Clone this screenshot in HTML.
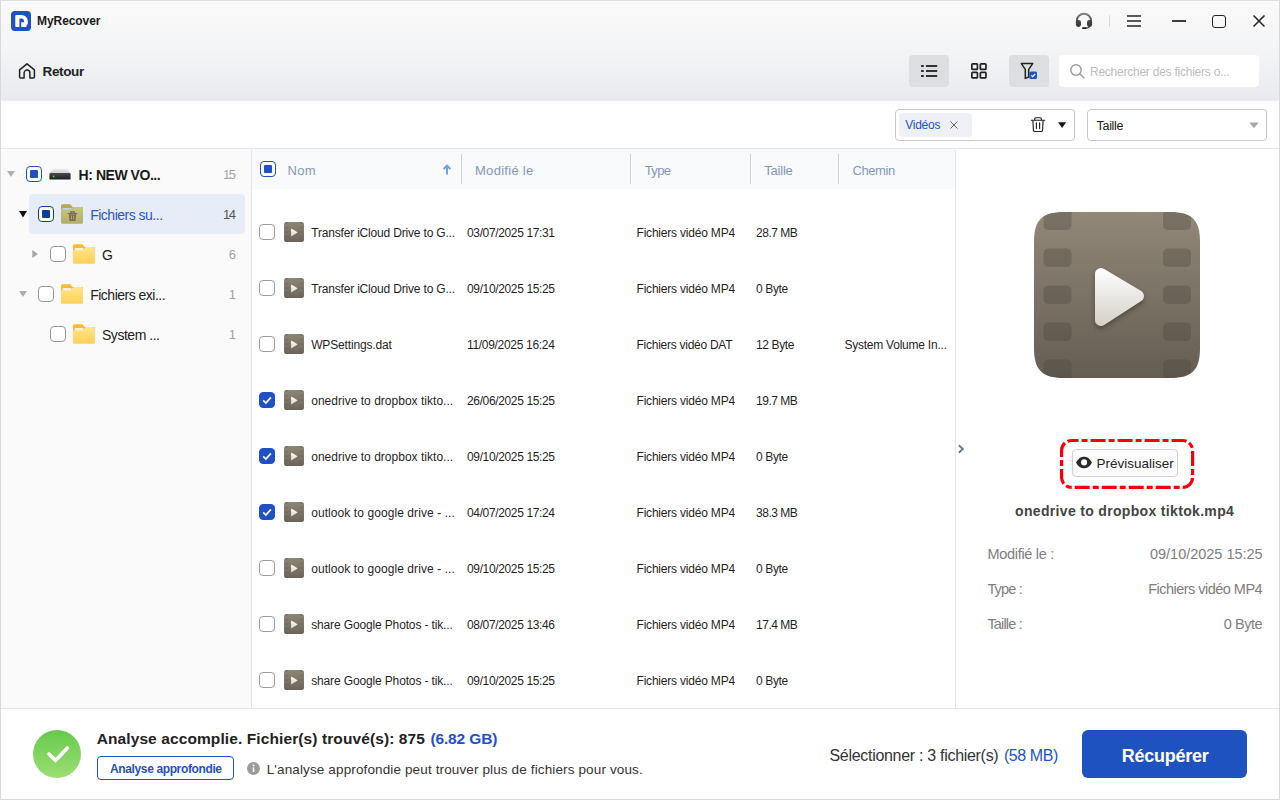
<!DOCTYPE html>
<html lang="fr">
<head>
<meta charset="utf-8">
<title>MyRecover</title>
<style>
*{box-sizing:border-box;margin:0;padding:0}
html,body{width:1280px;height:800px;overflow:hidden;background:#fff}
body{font-family:"Liberation Sans",sans-serif;color:#222;position:relative;font-size:13px}
.abs{position:absolute}
#frame{position:absolute;left:0;top:0;width:1280px;height:800px;border:1px solid #d9d9d9;border-top-color:#dedede;pointer-events:none;z-index:50}
#head{position:absolute;left:0;top:0;width:1280px;height:101px;background:linear-gradient(#fafafa 0,#f3f4f6 52px,#e9eaee 101px)}
.t{position:absolute;white-space:nowrap;line-height:1}
.tb{position:absolute;top:55px;width:40px;height:32px;border-radius:4px}
.tb.on{background:#dddee2}
#search{position:absolute;left:1059px;top:55px;width:200px;height:32px;border-radius:4px;background:#fff}
#filterrow{position:absolute;left:1px;top:101px;width:1278px;height:48px;background:#fff;border-bottom:1px solid #e3e6ec}
.box{position:absolute;top:109px;height:32px;border:1px solid #c9c9c9;border-radius:4px;background:#fff}
#tag{position:absolute;left:3px;top:3px;width:73px;height:24px;background:#eef0f5;border-radius:4px}
#side{position:absolute;left:1px;top:149px;width:251px;height:559px;background:#fafafa;border-right:1px solid #e3e4ec}
.trow{position:absolute;left:0;height:40px;width:250px}
.sel{position:absolute;left:29px;top:194px;width:216px;height:40px;background:#e6edf8;border-radius:4px}
.cb{position:absolute;width:16px;height:16px;border:1px solid #9a9a9a;border-radius:4px;background:#fff}
.cb.part{border-color:#1f51c4;border-width:1.5px}
.cb.part:after{content:"";position:absolute;left:2.5px;top:2.5px;width:8px;height:8px;background:#1f51c4;border-radius:1px}
.cb.part.dk{border-color:#0f3d9e}.cb.part.dk:after{background:#0f3d9e}
.cb.chk{border-color:#1f51c4;background:#1f51c4}
#list{position:absolute;left:252px;top:150px;width:703px;height:558px;background:#fff}
#lh{position:absolute;left:252px;top:149px;width:703px;height:40px;background:#f9fafb}
.hsep{position:absolute;top:154px;width:1px;height:30px;background:#cfd4dc}


#prev{position:absolute;left:955px;top:150px;width:324px;height:558px;background:#fff;border-left:1px solid #e1e4ea}
#bot{position:absolute;left:1px;top:708px;width:1278px;height:91px;background:#fff;border-top:1px solid #e5e5e8}
</style>
</head>
<body>
<div id="head"></div>

<svg class="abs" style="left:11px;top:11px" width="20" height="20" viewBox="0 0 20 20"><rect width="20" height="20" rx="4" fill="#1f51c4"/><path d="M4.300 5a1 1 0 0 1 1-1h5.300a6.200 6.200 0 0 1 6.200 6.200v1.600c0 1.400-.7 2.400-1.500 3.200v1H5.300a1 1 0 0 1-1-1z" fill="#fff"/><path d="M8.400 16V7.500h1.800a2.900 2.900 0 0 1 2.900 2.900v.8h-2.900V16z" fill="#1f51c4"/></svg>
<svg class="abs" style="left:18px;top:62px" width="18" height="18" viewBox="0 0 18 18" fill="none" stroke="#222" stroke-width="1.5" stroke-linejoin="round" stroke-linecap="round"><path d="M1.6 7.900 9 1.800l7.400 6.100v7.100a1 1 0 0 1-1 1h-3.500v-5a2.900 2.900 0 0 0-5.800 0v5H2.600a1 1 0 0 1-1-1z"/></svg>
<!-- window controls -->
<svg class="abs" style="left:1074px;top:11px" width="20" height="20" viewBox="0 0 20 20"><defs><linearGradient id="hs" x1="0" y1="0" x2="0" y2="20" gradientUnits="userSpaceOnUse"><stop offset="0.08" stop-color="#8c8c8c"/><stop offset="0.5" stop-color="#4a4a4a"/><stop offset="0.9" stop-color="#2c2c2c"/></linearGradient></defs><path d="M2.850 11.500V9.800a7.100 7.100 0 0 1 14.200 0v1.700" fill="none" stroke="url(#hs)" stroke-width="1.900"/><rect x="1.900" y="8.900" width="5.100" height="7" rx="2.400" fill="url(#hs)"/><rect x="13" y="8.900" width="5.100" height="7" rx="2.400" fill="url(#hs)"/><path d="M15.600 15.200c-.6 1.300-2 1.900-4.400 1.900" fill="none" stroke="#333" stroke-width="1.100"/><rect x="8" y="16.200" width="4.600" height="1.800" rx="0.900" fill="#222"/></svg>
<div class="abs" style="left:1108.500px;top:15px;width:1.500px;height:12px;background:#dcdcdc"></div>
<svg class="abs" style="left:1127px;top:14px" width="14" height="14" viewBox="0 0 14 14" stroke="#222" stroke-width="1.500"><path d="M0 2h14M0 7h14M0 12h14"/></svg>
<div class="abs" style="left:1172px;top:20px;width:14px;height:1.500px;background:#3c3c3c"></div>
<div class="abs" style="left:1212px;top:14.500px;width:13.700px;height:13.500px;border:1.800px solid #222;border-radius:3px"></div>
<svg class="abs" style="left:1253px;top:15px" width="12" height="12" viewBox="0 0 12 12" stroke="#222" stroke-width="1.500"><path d="M0.500 0.500l11 11M11.500 0.500l-11 11"/></svg>
<!-- toolbar -->
<div class="tb on" style="left:909px"></div>
<svg class="abs" style="left:921px;top:64px" width="17" height="14" viewBox="0 0 17 14" fill="#333"><rect x="0" y="1" width="2.800" height="2"/><rect x="5" y="1" width="11.200" height="2"/><rect x="0" y="6" width="2.800" height="2"/><rect x="5" y="6" width="11.200" height="2"/><rect x="0" y="11" width="2.800" height="2"/><rect x="5" y="11" width="11.200" height="2"/></svg>
<svg class="abs" style="left:970px;top:62px" width="18" height="18" viewBox="0 0 18 18" fill="none" stroke="#222" stroke-width="1.700"><rect x="1.850" y="1.850" width="5.600" height="5.600" rx="0.800"/><rect x="10.350" y="1.850" width="5.600" height="5.600" rx="0.800"/><rect x="1.850" y="10.350" width="5.600" height="5.600" rx="0.800"/><rect x="10.350" y="10.350" width="5.600" height="5.600" rx="0.800"/></svg>
<div class="tb on" style="left:1009px"></div>
<svg class="abs" style="left:1019px;top:61px" width="20" height="20" viewBox="0 0 20 20"><path d="M2.300 2.600h11.400l-4 5.800v7.600l-3.400 1.400V8.400z" fill="none" stroke="#222" stroke-width="1.500" stroke-linejoin="round"/><rect x="10.400" y="10.500" width="7.600" height="7.600" rx="1.600" fill="#1f51c4"/><path d="M12.300 14.300l1.400 1.400 2.500-2.700" fill="none" stroke="#fff" stroke-width="1.200"/></svg>
<div id="search"><svg class="abs" style="left:10px;top:8px" width="17" height="17" viewBox="0 0 17 17" fill="none" stroke="#9c9c9c" stroke-width="1.500"><circle cx="7" cy="7" r="5.200"/><path d="M10.800 10.800l4 4" stroke-linecap="round"/></svg></div>

<div class="t" style="top:15px;font-size:12px;color:#1a1a1a;font-weight:bold;letter-spacing:-0.07px;left:37px;">MyRecover</div>
<div class="t" style="top:64.5px;font-size:13.5px;color:#222;font-weight:bold;letter-spacing:-0.35px;left:42.5px;">Retour</div>
<div class="t" style="top:66px;font-size:12px;color:#bdbdbd;letter-spacing:-0.24px;left:1090px;">Rechercher des fichiers o...</div>
<div id="filterrow"></div>

<div class="box" style="left:895px;width:180px"><div id="tag"></div></div>
<svg class="abs" style="left:950px;top:121px" width="8" height="8" viewBox="0 0 8 8" stroke="#666" stroke-width="1"><path d="M0.500 0.500l7 7M7.500 0.500l-7 7"/></svg>
<svg class="abs" style="left:1030px;top:116px" width="16" height="17" viewBox="0 0 16 17" fill="none" stroke="#222" stroke-width="1.150" stroke-linecap="round" stroke-linejoin="round"><path d="M1.300 4.200h13.400M4.700 4V2.700a1 1 0 0 1 1-1h4.600a1 1 0 0 1 1 1V4M2.900 4.500l.5 9.600a1.500 1.500 0 0 0 1.500 1.400h6.200a1.500 1.500 0 0 0 1.500-1.400l.5-9.600M6.400 6.800v5.800M9.600 6.800v5.800"/></svg>
<svg class="abs" style="left:1058px;top:122px" width="9" height="7" viewBox="0 0 9 7"><path d="M0 0.300h8.200L4.100 5.900z" fill="#161616"/></svg>
<div class="box" style="left:1087px;width:180px"></div>
<svg class="abs" style="left:1249px;top:122px" width="10" height="7" viewBox="0 0 10 7"><path d="M0.300 0.500h9.400L5 6.300z" fill="#a8a8a8"/></svg>

<div class="t" style="top:119px;font-size:12px;color:#2452c6;letter-spacing:-0.23px;left:905.2px;">Vidéos</div>
<div class="t" style="top:120px;font-size:12.5px;color:#222;letter-spacing:-0.33px;left:1096.6px;">Taille</div>
<div id="side"></div>

<div class="sel"></div>
<svg class="abs" style="left:7px;top:171px" width="8" height="6" viewBox="0 0 8 6"><path d="M0 0h8L4 6z" fill="#b0b0b0"/></svg>
<div class="cb part" style="left:26px;top:166px"></div>
<svg class="abs" style="left:49px;top:168px" width="22" height="12" viewBox="0 0 22 12"><defs><linearGradient id="dt" x1="0" y1="0" x2="0" y2="1"><stop offset="0" stop-color="#ececec"/><stop offset="1" stop-color="#cfcfcf"/></linearGradient><linearGradient id="db" x1="0" y1="0" x2="0" y2="1"><stop offset="0" stop-color="#4a4a4a"/><stop offset="1" stop-color="#1e1e1e"/></linearGradient></defs><path d="M3.800 0.700h14.400l3.300 4.500H0.500z" fill="url(#dt)"/><rect x="0.400" y="5" width="21.200" height="6.600" rx="0.900" fill="url(#db)"/><circle cx="4.600" cy="8.400" r="0.900" fill="#3fe04a"/></svg>

<svg class="abs" style="left:19px;top:211px" width="8" height="7" viewBox="0 0 8 7"><path d="M0 0h8L4 6.500z" fill="#111"/></svg>
<div class="cb part dk" style="left:38px;top:206px"></div>
<svg class="abs" style="left:61px;top:204px" width="22" height="20" viewBox="0 0 22 20"><defs><linearGradient id="ol" x1="0" y1="0" x2="0" y2="1"><stop offset="0" stop-color="#c8c680"/><stop offset="1" stop-color="#b2ae67"/></linearGradient></defs><path d="M0 1.700a1.500 1.500 0 0 1 1.500-1.500h7.200a1.500 1.500 0 0 1 1.200.6l1.600 2.300H22v6H0z" fill="#b7ab50"/><rect x="1.300" y="3.900" width="9.300" height="2.500" rx=".4" fill="#b3d6f0"/><path d="M0 5.500h9.200a1.500 1.500 0 0 0 1.100-.5l1.300-1.500a1.500 1.500 0 0 1 1.100-.5h7.800a1.500 1.500 0 0 1 1.500 1.500v13.800a1.500 1.500 0 0 1-1.500 1.500H1.500A1.500 1.500 0 0 1 0 18.300z" fill="url(#ol)"/><path d="M6.800 9.600h9.400M9.700 9.400V7.900h3.600v1.500" fill="none" stroke="#7a6853" stroke-width="1.300"/><path d="M7.900 10.400h7.200l-.5 5.800a.9.900 0 0 1-.9.800H9.300a.9.900 0 0 1-.9-.8z" fill="#7a6853"/><path d="M10.400 11.600v3.900M12.600 11.600v3.900" stroke="#b9b571" stroke-width=".9"/></svg>

<svg class="abs" style="left:32px;top:250px" width="6" height="8" viewBox="0 0 6 8"><path d="M0.300 0v8L6 4z" fill="#a6a6a6"/></svg>
<div class="cb" style="left:50px;top:246px"></div>
<svg class="abs fold" style="left:73px;top:244px" width="22" height="20" viewBox="0 0 22 20"><use href="#folder"/></svg>

<svg class="abs" style="left:19px;top:291px" width="8" height="6" viewBox="0 0 8 6"><path d="M0 0h8L4 6z" fill="#b0b0b0"/></svg>
<div class="cb" style="left:38px;top:286px"></div>
<svg class="abs fold" style="left:61px;top:284px" width="22" height="20" viewBox="0 0 22 20"><use href="#folder"/></svg>

<div class="cb" style="left:50px;top:326px"></div>
<svg class="abs fold" style="left:73px;top:324px" width="22" height="20" viewBox="0 0 22 20"><use href="#folder"/></svg>
<svg width="0" height="0" style="position:absolute"><defs><linearGradient id="fg" x1="0" y1="0" x2="0" y2="1"><stop offset="0" stop-color="#ffe589"/><stop offset="1" stop-color="#fdd05a"/></linearGradient><g id="folder"><path d="M0 1.700a1.500 1.500 0 0 1 1.500-1.500h7.200a1.500 1.500 0 0 1 1.200.6l1.600 2.300H22v6H0z" fill="#f9bc2c"/><rect x="1.800" y="4" width="8.600" height="3" rx=".5" fill="#f6f2e8"/><path d="M0 6.300h9.200a1.500 1.500 0 0 0 1.100-.5l1.700-2.300a1.500 1.500 0 0 1 1.100-.5h7.400a1.500 1.500 0 0 1 1.500 1.500v13.800a1.500 1.500 0 0 1-1.500 1.500H1.500A1.500 1.500 0 0 1 0 18.300z" fill="url(#fg)"/></g></defs></svg>

<div class="t" style="top:167.8px;font-size:14px;color:#1a1a1a;font-weight:bold;letter-spacing:-0.46px;left:78.6px;">H: NEW VO...</div>
<div class="t" style="top:167.7px;font-size:13px;color:#a2a2a2;letter-spacing:-1.53px;left:auto;right:1045.53px;">15</div>
<div class="t" style="top:207.5px;font-size:14px;color:#2a55c8;letter-spacing:-0.5px;left:90.2px;">Fichiers su...</div>
<div class="t" style="top:207.7px;font-size:13px;color:#555;letter-spacing:-1.53px;left:auto;right:1045.53px;">14</div>
<div class="t" style="top:247.5px;font-size:14px;color:#222;left:102px;">G</div>
<div class="t" style="top:247.7px;font-size:13px;color:#a2a2a2;left:auto;right:1044px;">6</div>
<div class="t" style="top:287.5px;font-size:14px;color:#222;letter-spacing:-0.5px;left:90.2px;">Fichiers exi...</div>
<div class="t" style="top:287.7px;font-size:13px;color:#a2a2a2;left:auto;right:1044px;">1</div>
<div class="t" style="top:327.5px;font-size:14px;color:#222;letter-spacing:-0.47px;left:102px;">System ...</div>
<div class="t" style="top:327.7px;font-size:13px;color:#a2a2a2;left:auto;right:1044px;">1</div>
<div id="list"></div>
<div id="lh"></div>

<div class="cb part" style="left:260px;top:161px"></div>

<svg class="abs" style="left:441.900px;top:163.500px" width="10" height="11" viewBox="0 0 10 11" fill="none" stroke="#6ea0e6" stroke-width="2"><path d="M5 10.500V2M1.600 5 5 1.600 8.400 5"/></svg>
<div class="hsep" style="left:461px"></div>

<div class="hsep" style="left:630px"></div>

<div class="hsep" style="left:750px"></div>

<div class="hsep" style="left:838px"></div>

<svg width="0" height="0" style="position:absolute"><defs><linearGradient id="vg" x1="0" y1="0" x2="0" y2="1"><stop offset="0" stop-color="#8e8677"/><stop offset="1" stop-color="#6c665a"/></linearGradient><linearGradient id="pg" x1="0" y1="0" x2="0" y2="1"><stop offset="0" stop-color="#ffffff"/><stop offset="1" stop-color="#d9d5cc"/></linearGradient><g id="vid"><rect width="20" height="20" rx="2.500" fill="url(#vg)"/><g fill="#5f594e" opacity=".32"><rect x="1.200" y="0" width="3.200" height="2" rx=".6"/><rect x="1.200" y="4.400" width="3.200" height="2.200" rx=".6"/><rect x="1.200" y="8.900" width="3.200" height="2.200" rx=".6"/><rect x="1.200" y="13.400" width="3.200" height="2.200" rx=".6"/><rect x="1.200" y="18" width="3.200" height="2" rx=".6"/><rect x="15.600" y="0" width="3.200" height="2" rx=".6"/><rect x="15.600" y="4.400" width="3.200" height="2.200" rx=".6"/><rect x="15.600" y="8.900" width="3.200" height="2.200" rx=".6"/><rect x="15.600" y="13.400" width="3.200" height="2.200" rx=".6"/><rect x="15.600" y="18" width="3.200" height="2" rx=".6"/></g><path d="M7.1 7.2v6.5a.5.5 0 0 0 .8.4l5.2-3.3a.5.5 0 0 0 0-.8L7.900 6.800a.5.5 0 0 0-.8.400z" fill="url(#pg)"/></g></defs></svg>
<div class="cb" style="left:259px;top:224px"></div><svg class="abs" style="left:284px;top:222px" width="20" height="20" viewBox="0 0 20 20"><use href="#vid"/></svg>
<div class="cb" style="left:259px;top:280px"></div><svg class="abs" style="left:284px;top:278px" width="20" height="20" viewBox="0 0 20 20"><use href="#vid"/></svg>
<div class="cb" style="left:259px;top:336px"></div><svg class="abs" style="left:284px;top:334px" width="20" height="20" viewBox="0 0 20 20"><use href="#vid"/></svg>
<div class="cb chk" style="left:259px;top:392px"><svg width="14" height="14" viewBox="0 0 14 14" style="position:absolute;left:0;top:0" fill="none" stroke="#fff" stroke-width="1.700"><path d="M3.200 7.300l2.700 2.700 5-5.600"/></svg></div><svg class="abs" style="left:284px;top:390px" width="20" height="20" viewBox="0 0 20 20"><use href="#vid"/></svg>
<div class="cb chk" style="left:259px;top:448px"><svg width="14" height="14" viewBox="0 0 14 14" style="position:absolute;left:0;top:0" fill="none" stroke="#fff" stroke-width="1.700"><path d="M3.200 7.300l2.700 2.700 5-5.600"/></svg></div><svg class="abs" style="left:284px;top:446px" width="20" height="20" viewBox="0 0 20 20"><use href="#vid"/></svg>
<div class="cb chk" style="left:259px;top:504px"><svg width="14" height="14" viewBox="0 0 14 14" style="position:absolute;left:0;top:0" fill="none" stroke="#fff" stroke-width="1.700"><path d="M3.200 7.300l2.700 2.700 5-5.600"/></svg></div><svg class="abs" style="left:284px;top:502px" width="20" height="20" viewBox="0 0 20 20"><use href="#vid"/></svg>
<div class="cb" style="left:259px;top:560px"></div><svg class="abs" style="left:284px;top:558px" width="20" height="20" viewBox="0 0 20 20"><use href="#vid"/></svg>
<div class="cb" style="left:259px;top:616px"></div><svg class="abs" style="left:284px;top:614px" width="20" height="20" viewBox="0 0 20 20"><use href="#vid"/></svg>
<div class="cb" style="left:259px;top:672px"></div><svg class="abs" style="left:284px;top:670px" width="20" height="20" viewBox="0 0 20 20"><use href="#vid"/></svg>

<div class="t" style="top:164px;font-size:13px;color:#8497bb;letter-spacing:0.42px;left:287.4px;">Nom</div>
<div class="t" style="top:164px;font-size:13px;color:#8497bb;letter-spacing:0.29px;left:475px;">Modifié le</div>
<div class="t" style="top:164px;font-size:13px;color:#8497bb;letter-spacing:-0.6px;left:644.7px;">Type</div>
<div class="t" style="top:164px;font-size:13px;color:#8497bb;letter-spacing:-0.2px;left:764.2px;">Taille</div>
<div class="t" style="top:164px;font-size:13px;color:#8497bb;letter-spacing:-0.38px;left:852.4px;">Chemin</div>
<div class="t" style="top:226.5px;font-size:12px;color:#1f1f1f;letter-spacing:-0.18px;left:311.2px;">Transfer iCloud Drive to G...</div>
<div class="t" style="top:226.5px;font-size:12px;color:#1f1f1f;letter-spacing:-0.36px;left:467px;">03/07/2025 17:31</div>
<div class="t" style="top:226.5px;font-size:12px;color:#1f1f1f;letter-spacing:-0.2px;left:636.5px;">Fichiers vidéo MP4</div>
<div class="t" style="top:226.5px;font-size:12px;color:#1f1f1f;letter-spacing:-0.47px;left:756px;">28.7 MB</div>
<div class="t" style="top:282.5px;font-size:12px;color:#1f1f1f;letter-spacing:-0.18px;left:311.2px;">Transfer iCloud Drive to G...</div>
<div class="t" style="top:282.5px;font-size:12px;color:#1f1f1f;letter-spacing:-0.36px;left:467px;">09/10/2025 15:25</div>
<div class="t" style="top:282.5px;font-size:12px;color:#1f1f1f;letter-spacing:-0.2px;left:636.5px;">Fichiers vidéo MP4</div>
<div class="t" style="top:282.5px;font-size:12px;color:#1f1f1f;letter-spacing:-0.35px;left:756px;">0 Byte</div>
<div class="t" style="top:338.5px;font-size:12px;color:#1f1f1f;letter-spacing:-0.16px;left:311.2px;">WPSettings.dat</div>
<div class="t" style="top:338.5px;font-size:12px;color:#1f1f1f;letter-spacing:-0.31px;left:467px;">11/09/2025 16:24</div>
<div class="t" style="top:338.5px;font-size:12px;color:#1f1f1f;letter-spacing:-0.26px;left:636.5px;">Fichiers vidéo DAT</div>
<div class="t" style="top:338.5px;font-size:12px;color:#1f1f1f;letter-spacing:-0.38px;left:756px;">12 Byte</div>
<div class="t" style="top:338.5px;font-size:12px;color:#1f1f1f;letter-spacing:-0.23px;left:844.4px;">System Volume In...</div>
<div class="t" style="top:394.5px;font-size:12px;color:#1f1f1f;letter-spacing:0.02px;left:311.2px;">onedrive to dropbox tikto...</div>
<div class="t" style="top:394.5px;font-size:12px;color:#1f1f1f;letter-spacing:-0.36px;left:467px;">26/06/2025 15:25</div>
<div class="t" style="top:394.5px;font-size:12px;color:#1f1f1f;letter-spacing:-0.2px;left:636.5px;">Fichiers vidéo MP4</div>
<div class="t" style="top:394.5px;font-size:12px;color:#1f1f1f;letter-spacing:-0.47px;left:756px;">19.7 MB</div>
<div class="t" style="top:450.5px;font-size:12px;color:#1f1f1f;letter-spacing:0.02px;left:311.2px;">onedrive to dropbox tikto...</div>
<div class="t" style="top:450.5px;font-size:12px;color:#1f1f1f;letter-spacing:-0.36px;left:467px;">09/10/2025 15:25</div>
<div class="t" style="top:450.5px;font-size:12px;color:#1f1f1f;letter-spacing:-0.2px;left:636.5px;">Fichiers vidéo MP4</div>
<div class="t" style="top:450.5px;font-size:12px;color:#1f1f1f;letter-spacing:-0.35px;left:756px;">0 Byte</div>
<div class="t" style="top:506.5px;font-size:12px;color:#1f1f1f;letter-spacing:0.08px;left:311.2px;">outlook to google drive - ...</div>
<div class="t" style="top:506.5px;font-size:12px;color:#1f1f1f;letter-spacing:-0.36px;left:467px;">04/07/2025 17:24</div>
<div class="t" style="top:506.5px;font-size:12px;color:#1f1f1f;letter-spacing:-0.2px;left:636.5px;">Fichiers vidéo MP4</div>
<div class="t" style="top:506.5px;font-size:12px;color:#1f1f1f;letter-spacing:-0.47px;left:756px;">38.3 MB</div>
<div class="t" style="top:562.5px;font-size:12px;color:#1f1f1f;letter-spacing:0.08px;left:311.2px;">outlook to google drive - ...</div>
<div class="t" style="top:562.5px;font-size:12px;color:#1f1f1f;letter-spacing:-0.36px;left:467px;">09/10/2025 15:25</div>
<div class="t" style="top:562.5px;font-size:12px;color:#1f1f1f;letter-spacing:-0.2px;left:636.5px;">Fichiers vidéo MP4</div>
<div class="t" style="top:562.5px;font-size:12px;color:#1f1f1f;letter-spacing:-0.35px;left:756px;">0 Byte</div>
<div class="t" style="top:618.5px;font-size:12px;color:#1f1f1f;letter-spacing:-0.14px;left:311.2px;">share Google Photos - tik...</div>
<div class="t" style="top:618.5px;font-size:12px;color:#1f1f1f;letter-spacing:-0.36px;left:467px;">08/07/2025 13:46</div>
<div class="t" style="top:618.5px;font-size:12px;color:#1f1f1f;letter-spacing:-0.2px;left:636.5px;">Fichiers vidéo MP4</div>
<div class="t" style="top:618.5px;font-size:12px;color:#1f1f1f;letter-spacing:-0.47px;left:756px;">17.4 MB</div>
<div class="t" style="top:674.5px;font-size:12px;color:#1f1f1f;letter-spacing:-0.14px;left:311.2px;">share Google Photos - tik...</div>
<div class="t" style="top:674.5px;font-size:12px;color:#1f1f1f;letter-spacing:-0.36px;left:467px;">09/10/2025 15:25</div>
<div class="t" style="top:674.5px;font-size:12px;color:#1f1f1f;letter-spacing:-0.2px;left:636.5px;">Fichiers vidéo MP4</div>
<div class="t" style="top:674.5px;font-size:12px;color:#1f1f1f;letter-spacing:-0.35px;left:756px;">0 Byte</div>
<div id="prev"></div>
<svg class="abs" style="left:1034px;top:212px" width="166" height="166" viewBox="0 0 166 166">
<defs>
<linearGradient id="bg1" x1="0" y1="0" x2="0" y2="1"><stop offset="0" stop-color="#918878"/><stop offset="1" stop-color="#645d52"/></linearGradient>
<linearGradient id="pl1" x1="0" y1="0" x2="0" y2="1"><stop offset="0" stop-color="#ffffff"/><stop offset="1" stop-color="#d5d0c6"/></linearGradient>
<clipPath id="cp1"><path d="M0 30C0 8 8 0 30 0h106c22 0 30 8 30 30v106c0 22-8 30-30 30H30c-22 0-30-8-30-30z"/></clipPath>
<filter id="sh1" x="-30%" y="-30%" width="160%" height="160%"><feGaussianBlur stdDeviation="2.5"/></filter>
</defs>
<g clip-path="url(#cp1)">
<rect width="166" height="166" fill="url(#bg1)"/>
<g fill="#4a443b" opacity=".32">
<rect x="9.500" y="-8" width="28" height="26" rx="5"/><rect x="9.500" y="36.500" width="28" height="18.500" rx="5"/><rect x="9.500" y="73.500" width="28" height="18.500" rx="5"/><rect x="9.500" y="110.500" width="28" height="18.500" rx="5"/><rect x="9.500" y="147.500" width="28" height="26" rx="5"/>
<rect x="129" y="-8" width="28" height="26" rx="5"/><rect x="129" y="36.500" width="28" height="18.500" rx="5"/><rect x="129" y="73.500" width="28" height="18.500" rx="5"/><rect x="129" y="110.500" width="28" height="18.500" rx="5"/><rect x="129" y="147.500" width="28" height="26" rx="5"/>
</g>
</g>
<path d="M61 62v46a6 6 0 0 0 9.200 5.100l37-24a6 6 0 0 0 0-10.100l-37-22.100A6 6 0 0 0 61 62z" fill="#2b261f" opacity=".45" filter="url(#sh1)" transform="translate(0,3)"/>
<path d="M61 62v46a6 6 0 0 0 9.200 5.100l37-24a6 6 0 0 0 0-10.100l-37-22.100A6 6 0 0 0 61 62z" fill="url(#pl1)"/>
</svg>
<svg class="abs" style="left:957px;top:444px" width="8" height="10" viewBox="0 0 8 10" fill="none" stroke="#6b778c" stroke-width="1.900"><path d="M1.800 1.300 5.800 5 1.800 8.700"/></svg>
<svg class="abs" style="left:1058px;top:436px" width="140" height="56" viewBox="0 0 140 56"><rect x="3.600" y="4.500" width="131" height="46.900" rx="10" fill="none" stroke="#f5000a" stroke-width="3.200" stroke-dasharray="15 3 6 3" stroke-dashoffset="8"/></svg>
<div class="abs" style="left:1072px;top:449px;width:106px;height:28px;border:1px solid #cfcfcf;border-radius:4px;background:#fcfcfc"></div>
<svg class="abs" style="left:1076px;top:456px" width="16" height="13" viewBox="0 0 16 13"><path d="M0 6.500C2.200 2.400 4.800 0.700 8 0.700s5.800 1.700 8 5.800c-2.200 4.100-4.800 5.800-8 5.800S2.200 10.600 0 6.500z" fill="#2a2a2a"/><circle cx="8.100" cy="6.400" r="3.050" fill="#fff"/></svg>
<div class="t" style="top:456.5px;font-size:13.5px;color:#222;letter-spacing:-0.01px;left:1096.5px;">Prévisualiser</div>
<div class="t" style="top:503.5px;font-size:14px;color:#444;font-weight:bold;letter-spacing:0.33px;left:1015px;">onedrive to dropbox tiktok.mp4</div>
<div class="t" style="top:547px;font-size:14.5px;color:#7e7e7e;letter-spacing:-0.29px;left:987.4px;">Modifié le :</div>
<div class="t" style="top:547px;font-size:14.5px;color:#7e7e7e;letter-spacing:-0.02px;left:auto;right:17.42px;">09/10/2025 15:25</div>
<div class="t" style="top:582px;font-size:14.5px;color:#7e7e7e;letter-spacing:-0.83px;left:987.4px;">Type :</div>
<div class="t" style="top:582px;font-size:14.5px;color:#7e7e7e;letter-spacing:-0.52px;left:auto;right:17.92px;">Fichiers vidéo MP4</div>
<div class="t" style="top:617px;font-size:14.5px;color:#7e7e7e;letter-spacing:-0.83px;left:987.4px;">Taille :</div>
<div class="t" style="top:617px;font-size:14.5px;color:#7e7e7e;letter-spacing:-0.45px;left:auto;right:17.85px;">0 Byte</div>
<div id="bot"></div>
<svg class="abs" style="left:33px;top:730px" width="48" height="48" viewBox="0 0 48 48"><defs><linearGradient id="gg" x1="0" y1="0" x2="0" y2="1"><stop offset="0" stop-color="#66ca4b"/><stop offset="1" stop-color="#9cde73"/></linearGradient></defs><circle cx="24" cy="24" r="24" fill="url(#gg)"/><path d="M16 24.100l6.500 6.500L34.300 18" fill="none" stroke="#fff" stroke-width="3.600" stroke-linecap="round" stroke-linejoin="round"/></svg>
<div class="abs" style="left:97px;top:756px;width:137px;height:24px;border:1px solid #1f51c4;border-radius:4px;background:#fff"></div>
<svg class="abs" style="left:247px;top:762px" width="13" height="13" viewBox="0 0 13 13"><circle cx="6.500" cy="6.500" r="6.500" fill="#9b9b9b"/><rect x="5.700" y="5.500" width="1.600" height="4.500" fill="#fff"/><circle cx="6.500" cy="3.600" r="1" fill="#fff"/></svg>
<div class="abs" style="left:1082px;top:730px;width:165px;height:48px;border-radius:6px;background:#1f52c1"></div>
<div class="t" style="top:731px;font-size:15.5px;color:#222;font-weight:bold;letter-spacing:0.1px;left:96.7px;">Analyse accomplie. Fichier(s) trouvé(s): 875</div>
<div class="t" style="top:731px;font-size:15.5px;color:#1f51c4;font-weight:bold;letter-spacing:-0.13px;left:430.4px;">(6.82 GB)</div>
<div class="t" style="top:762.5px;font-size:12px;color:#1f51c4;font-weight:bold;letter-spacing:-0.37px;left:110px;">Analyse approfondie</div>
<div class="t" style="top:762.5px;font-size:13.5px;color:#333;letter-spacing:0.13px;left:266.7px;">L'analyse approfondie peut trouver plus de fichiers pour vous.</div>
<div class="t" style="top:748.300px;font-size:16px;color:#333;letter-spacing:-0.3px;left:829.5px;">Sélectionner : 3 fichier(s)</div>
<div class="t" style="top:748.300px;font-size:16px;color:#2452c6;letter-spacing:-0.41px;left:1003.9px;">(58 MB)</div>
<div class="t" style="top:747px;font-size:18px;color:#fff;font-weight:bold;letter-spacing:-0.25px;left:1121.7px;">Récupérer</div>
<div id="frame"></div>
</body>
</html>
